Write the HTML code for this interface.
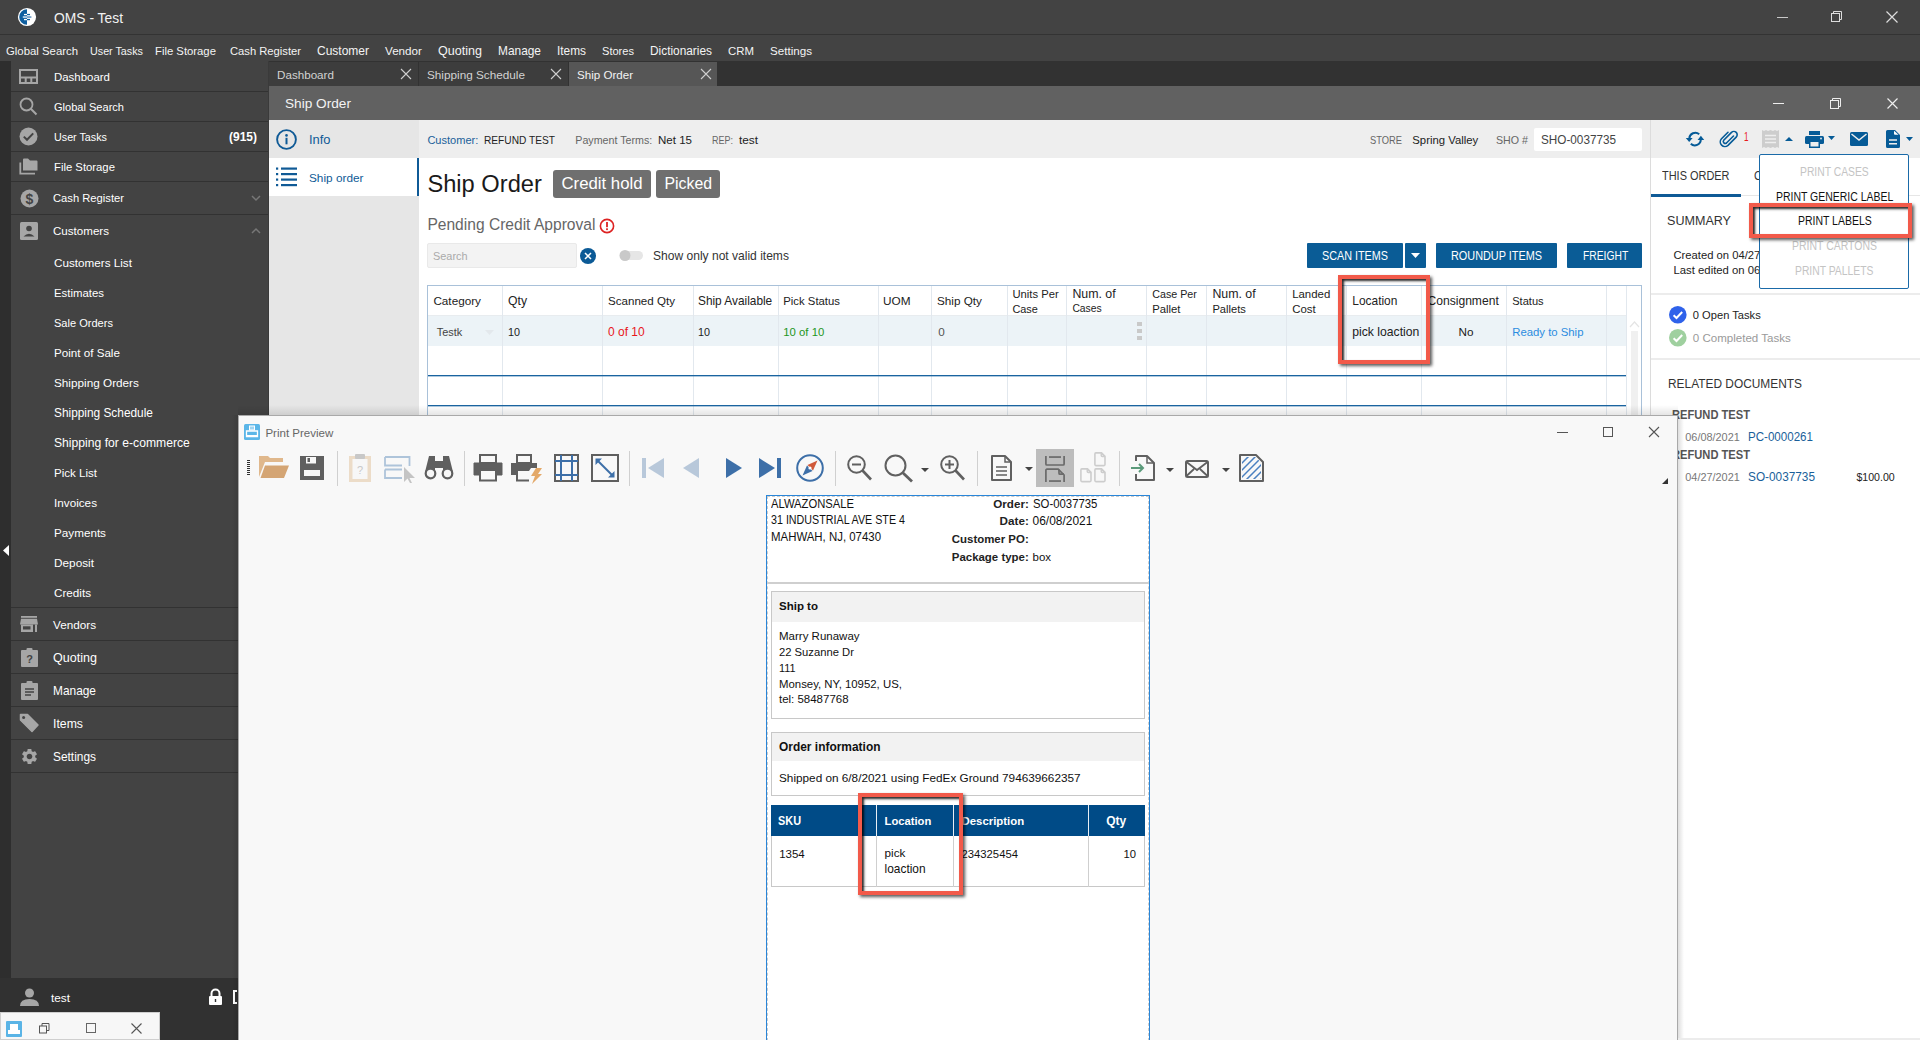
<!DOCTYPE html><html><head><meta charset="utf-8"><style>html,body{margin:0;padding:0;width:1920px;height:1040px;overflow:hidden;position:relative;background:#fff;font-family:"Liberation Sans",sans-serif}
.a{position:absolute}
.t{position:absolute;white-space:pre}
svg{overflow:visible}
</style></head><body ><div class="a" style="left:0px;top:0px;width:1920px;height:34px;background:#434343"></div>
<div class="a" style="left:0px;top:34px;width:1920px;height:1px;background:#333"></div>
<div class="a" style="left:0px;top:35px;width:1920px;height:26px;background:#434343"></div>
<svg class="a" style="left:18px;top:8px" width="18" height="18" viewBox="0 0 18 18"><circle cx="9" cy="9" r="9.1" fill="#fff"/><path d="M9 1.2 A7.8 7.8 0 0 0 9 16.8 Z" fill="#0f5fa0"/><rect x="6" y="5.9" width="3" height="1.3" fill="#fff"/><rect x="9" y="5.9" width="3" height="1.3" fill="#0f5fa0"/><rect x="4.8" y="8.3" width="4.2" height="1.5" fill="#d8e6f2"/><rect x="9" y="8.3" width="4.4" height="1.5" fill="#5b8fbf"/><rect x="6" y="10.9" width="3" height="1.3" fill="#fff"/><rect x="9" y="10.9" width="3" height="1.3" fill="#0f5fa0"/></svg>
<div class="t" style="left:54.0px;top:8.1px;font-size:13.85px;line-height:20px;color:#f2f2f2;">OMS - Test</div>
<div class="a" style="left:1777px;top:16.5px;width:11px;height:1.5px;background:#c8c8c8"></div>
<svg class="a" style="left:1831px;top:11px" width="12" height="12" viewBox="0 0 12 12"><rect x="0.5" y="2.5" width="8" height="8" fill="none" stroke="#ddd"/><path d="M2.5 2.5 V0.5 H10.5 V8.5 H8.5" fill="none" stroke="#ddd"/></svg>
<svg class="a" style="left:1886px;top:11px" width="12" height="12" viewBox="0 0 12 12"><path d="M0.5 0.5 L11.5 11.5 M11.5 0.5 L0.5 11.5" stroke="#ddd" stroke-width="1.2"/></svg>
<div class="t" style="left:6.0px;top:40.5px;font-size:11.36px;line-height:20px;color:#f4f4f4;">Global Search</div>
<div class="t" style="left:90.0px;top:40.5px;font-size:10.76px;line-height:20px;color:#f4f4f4;">User Tasks</div>
<div class="t" style="left:155.0px;top:40.5px;font-size:11.31px;line-height:20px;color:#f4f4f4;">File Storage</div>
<div class="t" style="left:230.0px;top:40.5px;font-size:11.21px;line-height:20px;color:#f4f4f4;">Cash Register</div>
<div class="t" style="left:317.0px;top:40.5px;font-size:12.0px;line-height:20px;color:#f4f4f4;">Customer</div>
<div class="t" style="left:385.0px;top:40.5px;font-size:11.67px;line-height:20px;color:#f4f4f4;">Vendor</div>
<div class="t" style="left:438.0px;top:40.5px;font-size:12.56px;line-height:20px;color:#f4f4f4;">Quoting</div>
<div class="t" style="left:498.0px;top:40.5px;font-size:11.9px;line-height:20px;color:#f4f4f4;">Manage</div>
<div class="t" style="left:557.0px;top:40.5px;font-size:11.86px;line-height:20px;color:#f4f4f4;">Items</div>
<div class="t" style="left:602.0px;top:40.5px;font-size:11.07px;line-height:20px;color:#f4f4f4;">Stores</div>
<div class="t" style="left:650.0px;top:40.5px;font-size:11.87px;line-height:20px;color:#f4f4f4;">Dictionaries</div>
<div class="t" style="left:728.0px;top:40.5px;font-size:11.42px;line-height:20px;color:#f4f4f4;">CRM</div>
<div class="t" style="left:770.0px;top:40.5px;font-size:11.62px;line-height:20px;color:#f4f4f4;">Settings</div>
<div class="a" style="left:0px;top:61px;width:11px;height:917px;background:#2e2e2e"></div>
<div class="a" style="left:11px;top:61px;width:257px;height:917px;background:#434343"></div>
<div class="a" style="left:268px;top:61px;width:1px;height:979px;background:#3a3a3a"></div>
<div class="a" style="left:11px;top:91px;width:257px;height:1px;background:#323232"></div>
<div class="a" style="left:11px;top:121px;width:257px;height:1px;background:#323232"></div>
<div class="a" style="left:11px;top:151px;width:257px;height:1px;background:#323232"></div>
<div class="a" style="left:11px;top:181px;width:257px;height:1px;background:#323232"></div>
<div class="a" style="left:11px;top:214px;width:257px;height:1px;background:#323232"></div>
<div class="a" style="left:11px;top:607px;width:257px;height:1px;background:#323232"></div>
<div class="a" style="left:11px;top:640px;width:257px;height:1px;background:#323232"></div>
<div class="a" style="left:11px;top:673px;width:257px;height:1px;background:#323232"></div>
<div class="a" style="left:11px;top:706px;width:257px;height:1px;background:#323232"></div>
<div class="a" style="left:11px;top:739px;width:257px;height:1px;background:#323232"></div>
<div class="a" style="left:11px;top:772px;width:257px;height:1px;background:#323232"></div>
<div class="t" style="left:54.0px;top:66.6px;font-size:11.45px;line-height:20px;color:#ffffff;">Dashboard</div>
<div class="t" style="left:54.0px;top:96.5px;font-size:11.05px;line-height:20px;color:#ffffff;">Global Search</div>
<div class="t" style="left:54.0px;top:126.5px;font-size:10.76px;line-height:20px;color:#ffffff;">User Tasks</div>
<div class="t" style="left:54.0px;top:156.5px;font-size:11.31px;line-height:20px;color:#ffffff;">File Storage</div>
<div class="t" style="left:53.0px;top:188.0px;font-size:11.21px;line-height:20px;color:#ffffff;">Cash Register</div>
<div class="t" style="left:53.0px;top:221.0px;font-size:11.58px;line-height:20px;color:#ffffff;">Customers</div>
<div class="t" style="left:229.0px;top:126.5px;font-size:11.99px;line-height:20px;color:#ffffff;font-weight:bold;">(915)</div>
<div class="t" style="left:54.0px;top:252.5px;font-size:11.7px;line-height:20px;color:#ffffff;">Customers List</div>
<div class="t" style="left:54.0px;top:282.5px;font-size:11.39px;line-height:20px;color:#ffffff;">Estimates</div>
<div class="t" style="left:54.0px;top:312.5px;font-size:11.06px;line-height:20px;color:#ffffff;">Sale Orders</div>
<div class="t" style="left:54.0px;top:342.5px;font-size:11.64px;line-height:20px;color:#ffffff;">Point of Sale</div>
<div class="t" style="left:54.0px;top:372.5px;font-size:11.76px;line-height:20px;color:#ffffff;">Shipping Orders</div>
<div class="t" style="left:54.0px;top:402.5px;font-size:11.87px;line-height:20px;color:#ffffff;">Shipping Schedule</div>
<div class="t" style="left:54.0px;top:432.5px;font-size:12.17px;line-height:20px;color:#ffffff;">Shipping for e-commerce</div>
<div class="t" style="left:54.0px;top:462.5px;font-size:11.55px;line-height:20px;color:#ffffff;">Pick List</div>
<div class="t" style="left:54.0px;top:492.5px;font-size:11.72px;line-height:20px;color:#ffffff;">Invoices</div>
<div class="t" style="left:54.0px;top:522.5px;font-size:11.69px;line-height:20px;color:#ffffff;">Payments</div>
<div class="t" style="left:54.0px;top:552.5px;font-size:11.8px;line-height:20px;color:#ffffff;">Deposit</div>
<div class="t" style="left:54.0px;top:582.5px;font-size:11.68px;line-height:20px;color:#ffffff;">Credits</div>
<div class="t" style="left:53.0px;top:614.5px;font-size:11.72px;line-height:20px;color:#ffffff;">Vendors</div>
<div class="t" style="left:53.0px;top:647.5px;font-size:12.56px;line-height:20px;color:#ffffff;">Quoting</div>
<div class="t" style="left:53.0px;top:681.0px;font-size:11.9px;line-height:20px;color:#ffffff;">Manage</div>
<div class="t" style="left:53.0px;top:714.0px;font-size:12.27px;line-height:20px;color:#ffffff;">Items</div>
<div class="t" style="left:53.0px;top:747.0px;font-size:11.9px;line-height:20px;color:#ffffff;">Settings</div>
<svg class="a" style="left:19px;top:69px" width="19" height="15" viewBox="0 0 19 15"><rect x="1" y="1" width="17" height="13" fill="none" stroke="#a6a6a6" stroke-width="2"/><path d="M1 8.5 H18 M6.7 8.5 V14 M12.3 8.5 V14" stroke="#a6a6a6" stroke-width="2"/></svg>
<svg class="a" style="left:19px;top:97px" width="19" height="19" viewBox="0 0 19 19"><circle cx="7.5" cy="7.5" r="6" fill="none" stroke="#a6a6a6" stroke-width="1.8"/><path d="M11.8 11.8 L17.5 17.5" stroke="#a6a6a6" stroke-width="2"/></svg>
<svg class="a" style="left:19px;top:127px" width="19" height="19" viewBox="0 0 19 19"><circle cx="9.5" cy="9.5" r="9" fill="#a6a6a6"/><path d="M4.8 9.6 L8 12.8 L14.2 6.4" fill="none" stroke="#434343" stroke-width="2"/></svg>
<svg class="a" style="left:19px;top:158px" width="19" height="17" viewBox="0 0 19 17"><path d="M4 1.5 A1 1 0 0 1 5 0.5 H9 L11 2.5 H17.5 A1 1 0 0 1 18.5 3.5 V12.5 H4 Z" fill="#a6a6a6"/><path d="M1.3 4.5 V15.7 H16" fill="none" stroke="#a6a6a6" stroke-width="1.8"/></svg>
<svg class="a" style="left:20px;top:189px" width="19" height="19" viewBox="0 0 19 19"><circle cx="9.5" cy="9.5" r="9" fill="#a6a6a6"/><text x="9.5" y="14.5" text-anchor="middle" font-family="Liberation Sans" font-size="14" font-weight="bold" fill="#434343">$</text></svg>
<svg class="a" style="left:20px;top:222px" width="18" height="18" viewBox="0 0 18 18"><rect x="0" y="0" width="18" height="18" rx="1.5" fill="#a6a6a6"/><circle cx="9" cy="6.5" r="2.8" fill="#434343"/><path d="M3.5 14.5 Q9 9 14.5 14.5 Z" fill="#434343"/></svg>
<svg class="a" style="left:251px;top:195px" width="10" height="6" viewBox="0 0 10 6"><path d="M1 1 L5 5 L9 1" fill="none" stroke="#777" stroke-width="1.5"/></svg>
<svg class="a" style="left:251px;top:228px" width="10" height="6" viewBox="0 0 10 6"><path d="M1 5 L5 1 L9 5" fill="none" stroke="#777" stroke-width="1.5"/></svg>
<svg class="a" style="left:20px;top:616px" width="18" height="17" viewBox="0 0 18 17"><rect x="1" y="0" width="16" height="1.8" fill="#a6a6a6"/><path d="M1 2.8 H17 L18 8.5 H0 Z" fill="#a6a6a6"/><rect x="1" y="8.5" width="12" height="7.5" fill="#a6a6a6"/><rect x="3" y="10.3" width="7.5" height="3.2" fill="#434343"/><rect x="15" y="8.5" width="2" height="7.5" fill="#a6a6a6"/></svg>
<svg class="a" style="left:21px;top:648px" width="17" height="19" viewBox="0 0 17 19"><rect x="0" y="2" width="17" height="17" rx="1" fill="#a6a6a6"/><rect x="5.5" y="0" width="6" height="4" rx="1" fill="#a6a6a6"/><text x="8.5" y="15" text-anchor="middle" font-family="Liberation Sans" font-size="11" font-weight="bold" fill="#434343">?</text></svg>
<svg class="a" style="left:21px;top:681px" width="17" height="19" viewBox="0 0 17 19"><rect x="0" y="2" width="17" height="17" rx="1" fill="#a6a6a6"/><rect x="5.5" y="0" width="6" height="4" rx="1" fill="#a6a6a6"/><path d="M4 8 H13 M4 11 H13 M4 14 H10" stroke="#434343" stroke-width="1.4"/></svg>
<svg class="a" style="left:19px;top:713px" width="20" height="20" viewBox="0 0 20 20"><path d="M1.5 1.5 H8.5 L19 12 L13 18.5 L1.5 7 Z" fill="#a6a6a6" stroke="#a6a6a6" stroke-width="1.5" stroke-linejoin="round"/><circle cx="4.6" cy="4.4" r="1.5" fill="#434343"/></svg>
<svg class="a" style="left:20px;top:747px" width="19" height="19" viewBox="0 0 24 24"><path fill="#a6a6a6" d="M19.14 12.94c.04-.3.06-.61.06-.94 0-.32-.02-.64-.07-.94l2.03-1.58a.49.49 0 0 0 .12-.61l-1.92-3.32a.488.488 0 0 0-.59-.22l-2.39.96c-.5-.38-1.03-.7-1.62-.94l-.36-2.54a.484.484 0 0 0-.48-.41h-3.84c-.24 0-.43.17-.47.41l-.36 2.54c-.59.24-1.13.57-1.62.94l-2.39-.96c-.22-.08-.47 0-.59.22L2.74 8.87c-.12.21-.08.47.12.61l2.03 1.58c-.05.3-.09.63-.09.94s.02.64.07.94l-2.03 1.58a.49.49 0 0 0-.12.61l1.92 3.32c.12.22.37.29.59.22l2.39-.96c.5.38 1.03.7 1.62.94l.36 2.54c.05.24.24.41.48.41h3.84c.24 0 .44-.17.47-.41l.36-2.54c.59-.24 1.13-.56 1.62-.94l2.39.96c.22.08.47 0 .59-.22l1.92-3.32c.12-.22.07-.47-.12-.61l-2.01-1.58zM12 15.6c-1.98 0-3.6-1.62-3.6-3.6s1.62-3.6 3.6-3.6 3.6 1.62 3.6 3.6-1.62 3.6-3.6 3.6z"/></svg>
<svg class="a" style="left:3px;top:545px" width="7" height="11" viewBox="0 0 7 11"><path d="M6 0 V11 L0 5.5 Z" fill="#fff"/></svg>
<div class="a" style="left:0px;top:978px;width:268px;height:62px;background:#313131"></div>
<svg class="a" style="left:20px;top:988px" width="19" height="18" viewBox="0 0 19 18"><circle cx="9.5" cy="5" r="4.5" fill="#a6a6a6"/><path d="M0 18 Q0 11 9.5 11 Q19 11 19 18 Z" fill="#a6a6a6"/></svg>
<div class="t" style="left:51.0px;top:987.5px;font-size:11.79px;line-height:20px;color:#fff;">test</div>
<svg class="a" style="left:208px;top:989px" width="15" height="16" viewBox="0 0 15 16"><path d="M3.5 7 V4.5 A4 4 0 0 1 11.5 4.5 V7" fill="none" stroke="#fff" stroke-width="2"/><rect x="1" y="7" width="13" height="9" rx="1" fill="#fff"/><rect x="6.8" y="10" width="1.4" height="3" fill="#313131"/></svg>
<div class="a" style="left:233px;top:990px;width:4px;height:14px;border:2px solid #fff;border-right:none;box-sizing:border-box"></div>
<div class="a" style="left:0px;top:1012px;width:160px;height:28px;background:#f7f7f7;border:1px solid #cfcfcf;box-sizing:border-box"></div>
<svg class="a" style="left:6px;top:1021px" width="16" height="16" viewBox="0 0 16 16"><rect x="0" y="0" width="16" height="16" rx="1" fill="#5ab4e6"/><rect x="4" y="3" width="8" height="6" fill="#fff"/><rect x="2" y="9" width="12" height="4" fill="#fff"/></svg>
<svg class="a" style="left:39px;top:1023px" width="11" height="11" viewBox="0 0 11 11"><rect x="0.5" y="3" width="7" height="7" fill="none" stroke="#555"/><path d="M3 3 V0.5 H10 V7.5 H7.5" fill="none" stroke="#555"/></svg>
<div class="a" style="left:86px;top:1023px;width:10px;height:10px;border:1px solid #666;box-sizing:border-box"></div>
<svg class="a" style="left:131px;top:1023px" width="11" height="11" viewBox="0 0 11 11"><path d="M0.5 0.5 L10.5 10.5 M10.5 0.5 L0.5 10.5" stroke="#555" stroke-width="1.1"/></svg>
<div class="a" style="left:269px;top:61px;width:1651px;height:25px;background:#323232"></div>
<div class="a" style="left:269px;top:62px;width:149px;height:24px;background:#3d3d3d"></div>
<div class="a" style="left:419px;top:62px;width:149px;height:24px;background:#3d3d3d"></div>
<div class="a" style="left:569px;top:62px;width:148px;height:24px;background:#565656"></div>
<div class="t" style="left:277.0px;top:64.5px;font-size:11.65px;line-height:20px;color:#d2d2d2;">Dashboard</div>
<div class="t" style="left:427.0px;top:64.5px;font-size:11.75px;line-height:20px;color:#d2d2d2;">Shipping Schedule</div>
<div class="t" style="left:577.0px;top:64.5px;font-size:11.58px;line-height:20px;color:#f2f2f2;">Ship Order</div>
<svg class="a" style="left:400px;top:68px" width="12" height="12" viewBox="0 0 12 12"><path d="M1 1 L11 11 M11 1 L1 11" stroke="#cfcfcf" stroke-width="1.1"/></svg>
<svg class="a" style="left:550px;top:68px" width="12" height="12" viewBox="0 0 12 12"><path d="M1 1 L11 11 M11 1 L1 11" stroke="#cfcfcf" stroke-width="1.1"/></svg>
<svg class="a" style="left:700px;top:68px" width="12" height="12" viewBox="0 0 12 12"><path d="M1 1 L11 11 M11 1 L1 11" stroke="#cfcfcf" stroke-width="1.1"/></svg>
<div class="a" style="left:269px;top:86px;width:1651px;height:34px;background:#616161"></div>
<div class="t" style="left:285.0px;top:94.0px;font-size:13.65px;line-height:20px;color:#f4f4f4;">Ship Order</div>
<div class="a" style="left:1773px;top:103px;width:11px;height:1px;background:#eee"></div>
<svg class="a" style="left:1830px;top:98px" width="11" height="11" viewBox="0 0 11 11"><rect x="0.5" y="2.5" width="8" height="8" fill="none" stroke="#eee"/><path d="M2.5 2.5 V0.5 H10.5 V8.5 H8.5" fill="none" stroke="#eee"/></svg>
<svg class="a" style="left:1887px;top:98px" width="11" height="11" viewBox="0 0 11 11"><path d="M0.5 0.5 L10.5 10.5 M10.5 0.5 L0.5 10.5" stroke="#eee" stroke-width="1.2"/></svg>
<div class="a" style="left:269px;top:120px;width:150px;height:920px;background:#e6e6e6"></div>
<div class="a" style="left:269px;top:158px;width:148px;height:38px;background:#fff"></div>
<div class="a" style="left:417px;top:158px;width:2px;height:38px;background:#0f5a96"></div>
<svg class="a" style="left:276px;top:129px" width="21" height="21" viewBox="0 0 21 21"><circle cx="10.5" cy="10.5" r="9.4" fill="none" stroke="#0f5a96" stroke-width="1.9"/><circle cx="10.5" cy="6.4" r="1.3" fill="#0f5a96"/><rect x="9.5" y="8.8" width="2" height="6.5" fill="#0f5a96"/></svg>
<div class="t" style="left:309.0px;top:129.5px;font-size:12.89px;line-height:20px;color:#0f5a96;">Info</div>
<svg class="a" style="left:276px;top:167px" width="21" height="20" viewBox="0 0 21 20"><rect x="0" y="0.5" width="2.2" height="2.2" fill="#0f5a96"/><rect x="5" y="0.5" width="16" height="2.2" fill="#0f5a96"/><rect x="0" y="6" width="2.2" height="2.2" fill="#0f5a96"/><rect x="5" y="6" width="16" height="2.2" fill="#0f5a96"/><rect x="0" y="11.5" width="2.2" height="2.2" fill="#0f5a96"/><rect x="5" y="11.5" width="16" height="2.2" fill="#0f5a96"/><rect x="0" y="17" width="2.2" height="2.2" fill="#0f5a96"/><rect x="5" y="17" width="16" height="2.2" fill="#0f5a96"/></svg>
<div class="t" style="left:309.0px;top:168.0px;font-size:11.81px;line-height:20px;color:#0f5a96;">Ship order</div>
<div class="a" style="left:419px;top:120px;width:1231px;height:38px;background:#eeeeee"></div>
<div class="t" style="left:427.4px;top:129.5px;font-size:11.06px;line-height:20px;color:#1a5f9a;">Customer:</div>
<div class="t" style="left:484.0px;top:129.5px;font-size:11.8px;line-height:20px;color:#222;transform:scaleX(0.8618);transform-origin:0 50%;">REFUND TEST</div>
<div class="t" style="left:575.3px;top:129.5px;font-size:10.69px;line-height:20px;color:#666;">Payment Terms:</div>
<div class="t" style="left:658.0px;top:129.5px;font-size:11.54px;line-height:20px;color:#222;">Net 15</div>
<div class="t" style="left:712.0px;top:129.5px;font-size:11px;line-height:20px;color:#666;transform:scaleX(0.8179);transform-origin:0 50%;">REP:</div>
<div class="t" style="left:739.0px;top:129.5px;font-size:11.79px;line-height:20px;color:#222;">test</div>
<div class="t" style="left:1370.3px;top:130.0px;font-size:11px;line-height:20px;color:#666;transform:scaleX(0.8489);transform-origin:0 50%;">STORE</div>
<div class="t" style="left:1412.3px;top:130.0px;font-size:11.34px;line-height:20px;color:#222;">Spring Valley</div>
<div class="t" style="left:1496.3px;top:130.0px;font-size:11px;line-height:20px;color:#666;transform:scaleX(0.9693);transform-origin:0 50%;">SHO #</div>
<div class="a" style="left:1534px;top:128px;width:108px;height:23px;background:#fff;border-radius:2px"></div>
<div class="t" style="left:1541.3px;top:130.0px;font-size:12px;line-height:20px;color:#444;transform:scaleX(0.9776);transform-origin:0 50%;">SHO-0037735</div>
<div class="a" style="left:419px;top:158px;width:1231px;height:882px;background:#fff"></div>
<div class="t" style="left:427.4px;top:173.5px;font-size:23.68px;line-height:20px;color:#1a1a1a;">Ship Order</div>
<div class="a" style="left:553px;top:169.5px;width:98px;height:28px;background:#6f6f6f;border-radius:3px"></div>
<div class="t" style="left:561.5px;top:173.5px;font-size:16.75px;line-height:20px;color:#fff;">Credit hold</div>
<div class="a" style="left:656px;top:169.5px;width:64px;height:28px;background:#6f6f6f;border-radius:3px"></div>
<div class="t" style="left:664.5px;top:173.5px;font-size:15.83px;line-height:20px;color:#fff;">Picked</div>
<div class="t" style="left:427.4px;top:214.6px;font-size:15.58px;line-height:20px;color:#666;">Pending Credit Approval</div>
<svg class="a" style="left:599px;top:218px" width="16" height="16" viewBox="0 0 16 16"><circle cx="8" cy="8" r="6.6" fill="none" stroke="#dd2222" stroke-width="1.6"/><rect x="7.1" y="4" width="1.8" height="5.2" fill="#dd2222"/><rect x="7.1" y="10.3" width="1.8" height="1.8" fill="#dd2222"/></svg>
<div class="a" style="left:427px;top:243px;width:150px;height:25px;background:#f3f3f3;border:1px solid #e9e9e9;border-radius:2px;box-sizing:border-box"></div>
<div class="t" style="left:433.0px;top:245.5px;font-size:10.92px;line-height:20px;color:#aaaaaa;">Search</div>
<svg class="a" style="left:580px;top:247.5px" width="16" height="16" viewBox="0 0 16 16"><circle cx="8" cy="8" r="8" fill="#0b5a96"/><path d="M5 5 L11 11 M11 5 L5 11" stroke="#fff" stroke-width="1.5"/></svg>
<div class="a" style="left:620px;top:251px;width:23px;height:9px;background:#e6e6e6;border-radius:5px"></div>
<svg class="a" style="left:619px;top:250px" width="12" height="12" viewBox="0 0 12 12"><circle cx="6" cy="5.5" r="5.5" fill="#c9c9c9"/></svg>
<div class="t" style="left:653.0px;top:245.5px;font-size:12.05px;line-height:20px;color:#333;">Show only not valid items</div>
<div class="a" style="left:1307px;top:243.2px;width:96px;height:24.4px;background:#0a5c96;border-radius:1px"></div>
<div class="a" style="left:1404.5px;top:243.2px;width:21.5px;height:24.4px;background:#0a5c96;border-radius:1px"></div>
<div class="a" style="left:1436.3px;top:243.2px;width:120.7px;height:24.4px;background:#0a5c96;border-radius:1px"></div>
<div class="a" style="left:1567.3px;top:243.2px;width:74.7px;height:24.4px;background:#0a5c96;border-radius:1px"></div>
<div class="t" style="left:1322.0px;top:245.5px;font-size:12px;line-height:20px;color:#fff;transform:scaleX(0.8999);transform-origin:0 50%;">SCAN ITEMS</div>
<svg class="a" style="left:1411px;top:253px" width="9" height="5" viewBox="0 0 9 5"><path d="M0 0 H9 L4.5 5 Z" fill="#fff"/></svg>
<div class="t" style="left:1451.3px;top:245.5px;font-size:12px;line-height:20px;color:#fff;transform:scaleX(0.9059);transform-origin:0 50%;">ROUNDUP ITEMS</div>
<div class="t" style="left:1582.5px;top:245.5px;font-size:12px;line-height:20px;color:#fff;transform:scaleX(0.8583);transform-origin:0 50%;">FREIGHT</div>
<div class="a" style="left:427px;top:284.5px;width:1215px;height:1px;background:#a9c1d9"></div>
<div class="a" style="left:427px;top:284.5px;width:1px;height:131px;background:#a9c1d9"></div>
<div class="a" style="left:1641px;top:284.5px;width:1px;height:131px;background:#a9c1d9"></div>
<div class="a" style="left:428px;top:315px;width:1198px;height:1px;background:#e8ecef"></div>
<div class="a" style="left:428px;top:316px;width:1198px;height:30px;background:#ecf3f7"></div>
<div class="a" style="left:502px;top:285.5px;width:1px;height:130px;background:#e2e8ee"></div>
<div class="a" style="left:602px;top:285.5px;width:1px;height:130px;background:#e2e8ee"></div>
<div class="a" style="left:692.5px;top:285.5px;width:1px;height:130px;background:#e2e8ee"></div>
<div class="a" style="left:777.5px;top:285.5px;width:1px;height:130px;background:#e2e8ee"></div>
<div class="a" style="left:877.5px;top:285.5px;width:1px;height:130px;background:#e2e8ee"></div>
<div class="a" style="left:931px;top:285.5px;width:1px;height:130px;background:#e2e8ee"></div>
<div class="a" style="left:1006.5px;top:285.5px;width:1px;height:130px;background:#e2e8ee"></div>
<div class="a" style="left:1066.2px;top:285.5px;width:1px;height:130px;background:#e2e8ee"></div>
<div class="a" style="left:1146px;top:285.5px;width:1px;height:130px;background:#e2e8ee"></div>
<div class="a" style="left:1206px;top:285.5px;width:1px;height:130px;background:#e2e8ee"></div>
<div class="a" style="left:1286px;top:285.5px;width:1px;height:130px;background:#e2e8ee"></div>
<div class="a" style="left:1346.3px;top:285.5px;width:1px;height:130px;background:#e2e8ee"></div>
<div class="a" style="left:1421px;top:285.5px;width:1px;height:130px;background:#e2e8ee"></div>
<div class="a" style="left:1505.7px;top:285.5px;width:1px;height:130px;background:#e2e8ee"></div>
<div class="a" style="left:1606.4px;top:285.5px;width:1px;height:130px;background:#e2e8ee"></div>
<div class="a" style="left:1625.6px;top:285.5px;width:1px;height:130px;background:#e2e8ee"></div>
<div class="a" style="left:428px;top:375px;width:1198px;height:1px;background:#1a64a0"></div>
<div class="a" style="left:428px;top:376px;width:1198px;height:1px;background:rgba(26,100,160,0.35)"></div>
<div class="a" style="left:428px;top:405px;width:1198px;height:1px;background:#1a64a0"></div>
<div class="a" style="left:428px;top:406px;width:1198px;height:1px;background:rgba(26,100,160,0.35)"></div>
<div class="a" style="left:1631px;top:331px;width:7px;height:84px;background:#f0f0f0"></div>
<svg class="a" style="left:1630px;top:322px" width="9" height="5" viewBox="0 0 9 5"><path d="M0 5 L4.5 0 L9 5" fill="none" stroke="#e4e4e4" stroke-width="1.2"/></svg>
<div class="t" style="left:433.4px;top:290.5px;font-size:11.73px;line-height:20px;color:#222;">Category</div>
<div class="t" style="left:508.0px;top:290.5px;font-size:12.21px;line-height:20px;color:#222;">Qty</div>
<div class="t" style="left:608.0px;top:290.5px;font-size:11.59px;line-height:20px;color:#222;">Scanned Qty</div>
<div class="t" style="left:698.0px;top:290.5px;font-size:11.85px;line-height:20px;color:#222;">Ship Available</div>
<div class="t" style="left:783.3px;top:290.5px;font-size:11.34px;line-height:20px;color:#222;">Pick Status</div>
<div class="t" style="left:883.3px;top:290.5px;font-size:11.5px;line-height:20px;color:#222;transform:scaleX(1.0249);transform-origin:0 50%;">UOM</div>
<div class="t" style="left:937.0px;top:290.5px;font-size:11.73px;line-height:20px;color:#222;">Ship Qty</div>
<div class="t" style="left:1352.3px;top:290.5px;font-size:11.93px;line-height:20px;color:#222;">Location</div>
<div class="t" style="left:1427.5px;top:290.5px;font-size:12.1px;line-height:20px;color:#222;">Consignment</div>
<div class="t" style="left:1512.2px;top:290.5px;font-size:11.08px;line-height:20px;color:#222;">Status</div>
<div class="t" style="left:1012.4px;top:284.0px;font-size:11.26px;line-height:20px;color:#222;">Units Per</div>
<div class="t" style="left:1012.4px;top:299.0px;font-size:10.92px;line-height:20px;color:#222;">Case</div>
<div class="t" style="left:1072.4px;top:284.0px;font-size:12.37px;line-height:20px;color:#222;">Num. of</div>
<div class="t" style="left:1072.4px;top:299.0px;font-size:10.34px;line-height:20px;color:#222;">Cases</div>
<div class="t" style="left:1152.2px;top:284.0px;font-size:10.72px;line-height:20px;color:#222;">Case Per</div>
<div class="t" style="left:1152.2px;top:299.0px;font-size:11.31px;line-height:20px;color:#222;">Pallet</div>
<div class="t" style="left:1212.4px;top:284.0px;font-size:12.37px;line-height:20px;color:#222;">Num. of</div>
<div class="t" style="left:1212.4px;top:299.0px;font-size:11.13px;line-height:20px;color:#222;">Pallets</div>
<div class="t" style="left:1292.2px;top:284.0px;font-size:11.42px;line-height:20px;color:#222;">Landed</div>
<div class="t" style="left:1292.2px;top:299.0px;font-size:11.43px;line-height:20px;color:#222;">Cost</div>
<div class="t" style="left:436.8px;top:321.9px;font-size:10.93px;line-height:20px;color:#444;">Testk</div>
<svg class="a" style="left:485px;top:330px" width="9" height="5" viewBox="0 0 9 5"><path d="M0 0 H9 L4.5 5 Z" fill="#e3e8ec"/></svg>
<div class="t" style="left:508.0px;top:321.9px;font-size:10.79px;line-height:20px;color:#222;">10</div>
<div class="t" style="left:608.0px;top:321.9px;font-size:11.97px;line-height:20px;color:#e8171b;">0 of 10</div>
<div class="t" style="left:698.0px;top:321.9px;font-size:10.79px;line-height:20px;color:#222;">10</div>
<div class="t" style="left:783.3px;top:321.9px;font-size:11.34px;line-height:20px;color:#1e961e;">10 of 10</div>
<div class="t" style="left:938.3px;top:322.3px;font-size:11.69px;line-height:20px;color:#555;">0</div>
<div class="a" style="left:1137px;top:322px;width:4.5px;height:4px;background:#c9c9c9"></div>
<div class="a" style="left:1137px;top:329px;width:4.5px;height:4px;background:#c9c9c9"></div>
<div class="a" style="left:1137px;top:336px;width:4.5px;height:4px;background:#c9c9c9"></div>
<div class="t" style="left:1352.3px;top:321.5px;font-size:12.18px;line-height:20px;color:#222;">pick loaction</div>
<div class="t" style="left:1458.6px;top:321.5px;font-size:11.73px;line-height:20px;color:#222;">No</div>
<div class="t" style="left:1512.2px;top:321.5px;font-size:11.35px;line-height:20px;color:#2b8ce0;">Ready to Ship</div>
<div class="a" style="left:1650px;top:120px;width:1px;height:920px;background:#dcdcdc"></div>
<div class="a" style="left:1651px;top:120px;width:269px;height:38px;background:#eeeeee"></div>
<div class="a" style="left:1651px;top:158px;width:269px;height:882px;background:#fff"></div>
<svg class="a" style="left:1685px;top:131px" width="20" height="16" viewBox="0 0 20 16"><path d="M4.3 7.5 A6 6 0 0 1 14.2 3.2" fill="none" stroke="#065b97" stroke-width="2"/><path d="M0.8 7 H7.6 L4.2 11 Z" fill="#065b97"/><path d="M15.8 8.5 A6 6 0 0 1 5.8 12.8" fill="none" stroke="#065b97" stroke-width="2"/><path d="M12.6 9 H19.2 L15.9 4.8 Z" fill="#065b97"/></svg>
<svg class="a" style="left:1720px;top:130px" width="18" height="19" viewBox="0 0 18 19"><path d="M13.5 6 L6.5 13 A2 2 0 0 1 3.7 10.2 L11.5 2.4 A3.3 3.3 0 0 1 16.2 7.1 L8 15.3 A4.6 4.6 0 0 1 1.5 8.8 L8 2.3" fill="none" stroke="#065b97" stroke-width="1.6" stroke-linecap="round"/></svg>
<div class="t" style="left:1743.8px;top:127.2px;font-size:12px;line-height:20px;color:#e81b1b;transform:scaleX(0.6742);transform-origin:0 50%;">1</div>
<svg class="a" style="left:1762px;top:130px" width="17" height="18" viewBox="0 0 17 18"><path d="M0 0 L2 1 L4 0 L6 1 L8.5 0 L11 1 L13 0 L15 1 L17 0 V18 L15 17 L13 18 L11 17 L8.5 18 L6 17 L4 18 L2 17 L0 18 Z" fill="#cdcdcd"/><path d="M3 5.5 H14 M3 9 H14 M3 12.5 H14" stroke="#eeeeee" stroke-width="1.3"/></svg>
<svg class="a" style="left:1785px;top:137px" width="8" height="4" viewBox="0 0 8 4"><path d="M0 4 L4 0 L8 4 Z" fill="#065b97"/></svg>
<svg class="a" style="left:1805px;top:131px" width="19" height="17" viewBox="0 0 19 17"><rect x="4" y="0" width="11" height="4" fill="#065b97"/><rect x="0" y="5" width="19" height="8" rx="1.5" fill="#065b97"/><rect x="4" y="10" width="11" height="7" fill="#065b97"/><rect x="5.5" y="11" width="8" height="4.5" fill="#eeeeee"/><circle cx="16" cy="7.5" r="0.9" fill="#eee"/></svg>
<svg class="a" style="left:1828px;top:136px" width="7" height="4" viewBox="0 0 7 4"><path d="M0 0 H7 L3.5 4 Z" fill="#065b97"/></svg>
<svg class="a" style="left:1850px;top:132px" width="18" height="14" viewBox="0 0 18 14"><rect x="0" y="0" width="18" height="14" rx="1.5" fill="#065b97"/><path d="M1.5 2 L9 8 L16.5 2" fill="none" stroke="#eeeeee" stroke-width="1.5"/></svg>
<svg class="a" style="left:1886px;top:130px" width="14" height="18" viewBox="0 0 14 18"><path d="M0 1.5 A1.5 1.5 0 0 1 1.5 0 H9 L14 5 V16.5 A1.5 1.5 0 0 1 12.5 18 H1.5 A1.5 1.5 0 0 1 0 16.5 Z" fill="#065b97"/><path d="M8 0.8 L8 3.8 A1 1 0 0 0 9 4.8 L12.5 4.8 Z" fill="#fff"/><path d="M3 9.9 H11 M3 13.7 H11" stroke="#eeeeee" stroke-width="1.5"/></svg>
<svg class="a" style="left:1906px;top:137px" width="7" height="4" viewBox="0 0 7 4"><path d="M0 0 H7 L3.5 4 Z" fill="#065b97"/></svg>
<div class="a" style="left:1651px;top:195px;width:269px;height:1px;background:#e6e6e6"></div>
<div class="a" style="left:1651px;top:194px;width:90px;height:2.5px;background:#0f5a96"></div>
<div class="t" style="left:1662.0px;top:166.2px;font-size:12.5px;line-height:20px;color:#333;transform:scaleX(0.8756);transform-origin:0 50%;">THIS ORDER</div>
<div class="t" style="left:1754.0px;top:166.2px;font-size:12.5px;line-height:20px;color:#333;transform:scaleX(0.8862);transform-origin:0 50%;">C</div>
<div class="t" style="left:1667.0px;top:211.4px;font-size:12.3px;line-height:20px;color:#333;transform:scaleX(1.0216);transform-origin:0 50%;">SUMMARY</div>
<div class="t" style="left:1673.5px;top:244.5px;font-size:11.24px;line-height:20px;color:#222;">Created on 04/27/2021</div>
<div class="t" style="left:1673.5px;top:259.6px;font-size:11.33px;line-height:20px;color:#222;">Last edited on 06/08/2021</div>
<div class="a" style="left:1651px;top:293px;width:269px;height:2px;background:#ececec"></div>
<svg class="a" style="left:1668.5px;top:306px" width="18" height="18" viewBox="0 0 18 18"><circle cx="8.8" cy="8.8" r="8.8" fill="#2f62ea"/><path d="M4.6 9.2 L7.5 12 L13.2 6" fill="none" stroke="#fff" stroke-width="2"/></svg>
<div class="t" style="left:1692.8px;top:304.7px;font-size:11.15px;line-height:20px;color:#222;">0 Open Tasks</div>
<svg class="a" style="left:1668.5px;top:329px" width="18" height="18" viewBox="0 0 18 18"><circle cx="8.8" cy="8.8" r="8.8" fill="#9fd09f"/><path d="M4.6 9.2 L7.5 12 L13.2 6" fill="none" stroke="#fff" stroke-width="2"/></svg>
<div class="t" style="left:1692.8px;top:327.9px;font-size:11.55px;line-height:20px;color:#9a9a9a;">0 Completed Tasks</div>
<div class="a" style="left:1651px;top:357.5px;width:269px;height:2px;background:#ececec"></div>
<div class="t" style="left:1667.8px;top:374.4px;font-size:12.5px;line-height:20px;color:#333;transform:scaleX(0.9520);transform-origin:0 50%;">RELATED DOCUMENTS</div>
<div class="t" style="left:1672.0px;top:405.4px;font-size:12px;line-height:20px;color:#555;font-weight:bold;transform:scaleX(0.9286);transform-origin:0 50%;">REFUND TEST</div>
<div class="t" style="left:1685.3px;top:426.9px;font-size:10.89px;line-height:20px;color:#777;">06/08/2021</div>
<div class="t" style="left:1748.3px;top:426.9px;font-size:12.3px;line-height:20px;color:#1a5f9a;transform:scaleX(0.9411);transform-origin:0 50%;">PC-0000261</div>
<div class="t" style="left:1672.0px;top:445.3px;font-size:12px;line-height:20px;color:#555;font-weight:bold;transform:scaleX(0.9286);transform-origin:0 50%;">REFUND TEST</div>
<div class="t" style="left:1685.3px;top:466.6px;font-size:10.89px;line-height:20px;color:#777;">04/27/2021</div>
<div class="t" style="left:1748.3px;top:466.6px;font-size:12.3px;line-height:20px;color:#1a5f9a;transform:scaleX(0.9605);transform-origin:0 50%;">SO-0037735</div>
<div class="t" style="left:1856.4px;top:466.6px;font-size:10.6px;line-height:20px;color:#222;">$100.00</div>
<div class="a" style="left:1759px;top:154px;width:150px;height:134.5px;background:#fff;border:1px solid #1a6aa8;border-radius:2px;box-sizing:border-box"></div>
<div class="t" style="left:1800.0px;top:161.6px;font-size:12.3px;line-height:20px;color:#c4c4c4;transform:scaleX(0.8399);transform-origin:0 50%;">PRINT CASES</div>
<div class="t" style="left:1775.6px;top:186.5px;font-size:12.3px;line-height:20px;color:#111;transform:scaleX(0.8509);transform-origin:0 50%;">PRINT GENERIC LABEL</div>
<div class="t" style="left:1797.5px;top:211.2px;font-size:12.3px;line-height:20px;color:#111;transform:scaleX(0.8511);transform-origin:0 50%;">PRINT LABELS</div>
<div class="t" style="left:1791.8px;top:236.3px;font-size:12.3px;line-height:20px;color:#c4c4c4;transform:scaleX(0.8518);transform-origin:0 50%;">PRINT CARTONS</div>
<div class="t" style="left:1795.1px;top:261.4px;font-size:12.3px;line-height:20px;color:#c4c4c4;transform:scaleX(0.8413);transform-origin:0 50%;">PRINT PALLETS</div>
<div class="a" style="left:1749px;top:203px;width:163px;height:35.19999999999999px;border:4px solid #f25a4a;box-sizing:border-box;box-shadow:2px 2px 3px rgba(0,0,0,0.65), inset 2px 2px 2.5px rgba(0,0,0,0.85)"></div>
<div class="a" style="left:1338.3px;top:275.2px;width:91.70000000000005px;height:89.0px;border:4px solid #f25a4a;box-sizing:border-box;box-shadow:2px 2px 3px rgba(0,0,0,0.65), inset 2px 2px 2.5px rgba(0,0,0,0.85)"></div>
<div class="a" style="left:238px;top:405px;width:1440px;height:10px;background:linear-gradient(to bottom, rgba(0,0,0,0) 0%, rgba(0,0,0,0.10) 100%)"></div>
<div class="a" style="left:1678px;top:415px;width:6px;height:625px;background:linear-gradient(to right, rgba(0,0,0,0.13) 0%, rgba(0,0,0,0) 100%)"></div>
<div class="a" style="left:232px;top:415px;width:6px;height:625px;background:linear-gradient(to left, rgba(0,0,0,0.10) 0%, rgba(0,0,0,0) 100%)"></div>
<div class="a" style="left:1678px;top:1038px;width:242px;height:2px;background:#ececec"></div>
<div class="a" style="left:238px;top:415px;width:1440px;height:625px;background:#f8f8f8;border:1px solid #a9a9a9;border-bottom:none;box-sizing:border-box"></div>
<svg class="a" style="left:244px;top:424px" width="16" height="16" viewBox="0 0 16 16"><rect x="0" y="0" width="16" height="16" rx="1.5" fill="#5bb6e8"/><rect x="5" y="1.5" width="6" height="5" fill="#fff"/><rect x="6" y="2.5" width="4" height="3" fill="#9fd4f2"/><path d="M2.5 7 H13.5 V12.5 H2.5 Z" fill="none" stroke="#fff" stroke-width="1.3"/><rect x="3" y="11" width="10" height="2" fill="#fff"/></svg>
<div class="t" style="left:265.4px;top:422.5px;font-size:11.54px;line-height:20px;color:#666;">Print Preview</div>
<div class="a" style="left:1557px;top:432px;width:10.5px;height:1.2px;background:#555"></div>
<div class="a" style="left:1603px;top:427px;width:10px;height:10px;border:1.2px solid #555;box-sizing:border-box"></div>
<svg class="a" style="left:1649px;top:427px" width="10" height="10" viewBox="0 0 10 10"><path d="M0 0 L10 10 M10 0 L0 10" stroke="#555" stroke-width="1.1"/></svg>
<svg class="a" style="left:1662px;top:478px" width="6" height="6" viewBox="0 0 6 6"><path d="M6 0 V6 H0 Z" fill="#333"/></svg>
<svg class="a" style="left:247px;top:460px" width="3" height="16" viewBox="0 0 3 16"><rect x="0" y="0" width="3" height="1" fill="#333"/><rect x="0" y="2" width="3" height="1" fill="#333"/><rect x="0" y="4" width="3" height="1" fill="#333"/><rect x="0" y="6" width="3" height="1" fill="#333"/><rect x="0" y="8" width="3" height="1" fill="#333"/><rect x="0" y="10" width="3" height="1" fill="#333"/><rect x="0" y="12" width="3" height="1" fill="#333"/><rect x="0" y="14" width="3" height="1" fill="#333"/></svg>
<svg class="a" style="left:259px;top:456px" width="30" height="22" viewBox="0 0 30 22"><path d="M0 0 H9 L11 2 H24 V6 H6 L0 21 Z" fill="#e0b88c"/><path d="M6 9.5 H30 L25 22 H1.5 Z" fill="#d4a574"/></svg>
<svg class="a" style="left:300px;top:456px" width="24" height="24" viewBox="0 0 24 24"><path d="M0 0 H24 V24 H0 Z" fill="#5f5f5f"/><rect x="6" y="1" width="10" height="6.5" fill="#f7f7f7"/><rect x="7.5" y="2" width="2.5" height="4" fill="#5f5f5f"/><rect x="4" y="14" width="16" height="6" fill="#f7f7f7"/></svg>
<div class="a" style="left:336.5px;top:451px;width:1px;height:35px;background:#d0d0d0"></div>
<svg class="a" style="left:349px;top:454px" width="22" height="28" viewBox="0 0 22 28"><path d="M0 2 H22 V28 H0 Z" fill="#ecdcc8"/><rect x="3.5" y="5" width="15" height="20" fill="#f7f7f7"/><rect x="6" y="0" width="10" height="5" rx="1" fill="#c8c8c8"/><text x="11" y="20" text-anchor="middle" font-family="Liberation Sans" font-size="11" fill="#c8c8c8">?</text></svg>
<svg class="a" style="left:384px;top:456px" width="32" height="27" viewBox="0 0 32 27"><path d="M1 1 H25.5 V10 M1 1 V9.5 H18 M1 13.5 H18 M1 13.5 V22 H18" fill="none" stroke="#aec4da" stroke-width="1.8"/><path d="M20 11 L31 22 L25.5 22 L28 27 L26 27 L23.5 22.5 L20 26 Z" fill="#c4c4c4"/></svg>
<svg class="a" style="left:425px;top:456px" width="28" height="24" viewBox="0 0 28 24"><path d="M4 0 H10 V5 H18 V0 H24 L28 16 H18 V12 H10 V16 H0 Z" fill="#5f5f5f"/><circle cx="5.5" cy="17.5" r="4.8" fill="#f7f7f7" stroke="#5f5f5f" stroke-width="2.2"/><circle cx="22.5" cy="17.5" r="4.8" fill="#f7f7f7" stroke="#5f5f5f" stroke-width="2.2"/></svg>
<div class="a" style="left:463.5px;top:451px;width:1px;height:35px;background:#d0d0d0"></div>
<svg class="a" style="left:474px;top:454px" width="28" height="28" viewBox="0 0 28 28"><rect x="6" y="1" width="16" height="8" fill="none" stroke="#5f5f5f" stroke-width="2"/><path d="M0 9 H28 V21 H22 V15 H6 V21 H0 Z" fill="#5f5f5f" stroke="#5f5f5f" stroke-linejoin="round" stroke-width="1"/><rect x="6" y="16" width="16" height="10.5" fill="none" stroke="#5f5f5f" stroke-width="2"/></svg>
<svg class="a" style="left:511px;top:454px" width="32" height="30" viewBox="0 0 32 30"><rect x="6" y="1" width="14" height="8" fill="none" stroke="#5f5f5f" stroke-width="2"/><path d="M0 9 H26 V14 H20 L18 17 H6 V21 H0 Z" fill="#5f5f5f"/><path d="M6 16 V26.5 H18" fill="none" stroke="#5f5f5f" stroke-width="2"/><path d="M25 14 L31 14 L27 20 L31 20 L21 30 L24 22 L20 22 Z" fill="#e3a868"/></svg>
<svg class="a" style="left:554px;top:454px" width="25" height="28" viewBox="0 0 25 28"><rect x="1" y="1" width="23" height="26" fill="none" stroke="#5f5f5f" stroke-width="2"/><path d="M7 1 V27 M18 1 V27 M1 7 H24 M1 21 H24" stroke="#3d6fa8" stroke-width="2"/></svg>
<svg class="a" style="left:591px;top:454px" width="28" height="28" viewBox="0 0 28 28"><rect x="1" y="1" width="26" height="26" fill="none" stroke="#5f5f5f" stroke-width="2"/><path d="M6 6 L22 22" stroke="#3d6fa8" stroke-width="2"/><path d="M4.5 4.5 H11 L4.5 11 Z M23.5 23.5 H17 L23.5 17 Z" fill="#3d6fa8"/></svg>
<div class="a" style="left:629.4px;top:451px;width:1px;height:35px;background:#d0d0d0"></div>
<svg class="a" style="left:642px;top:458px" width="22" height="20" viewBox="0 0 22 20"><rect x="0" y="0" width="4" height="20" fill="#b8c8da"/><path d="M22 0 V20 L6 10 Z" fill="#b8c8da"/></svg>
<svg class="a" style="left:683px;top:458px" width="16" height="20" viewBox="0 0 16 20"><path d="M16 0 V20 L0 10 Z" fill="#b8c8da"/></svg>
<svg class="a" style="left:726px;top:458px" width="16" height="20" viewBox="0 0 16 20"><path d="M0 0 V20 L16 10 Z" fill="#3d6fa8"/></svg>
<svg class="a" style="left:759px;top:458px" width="22" height="20" viewBox="0 0 22 20"><path d="M0 0 V20 L16 10 Z" fill="#3d6fa8"/><rect x="18" y="0" width="4" height="20" fill="#3d6fa8"/></svg>
<svg class="a" style="left:796px;top:454px" width="28" height="28" viewBox="0 0 28 28"><circle cx="14" cy="14" r="12.8" fill="none" stroke="#3d6fa8" stroke-width="2"/><path d="M21.5 6.5 L17 16.5 L11.5 11 Z" fill="#d0593a"/><path d="M6.5 21.5 L11 11.5 L16.5 17 Z" fill="#3d6fa8"/><circle cx="14" cy="14" r="1.6" fill="#fff"/></svg>
<div class="a" style="left:834.5px;top:451px;width:1px;height:35px;background:#d0d0d0"></div>
<svg class="a" style="left:847px;top:455px" width="25" height="26" viewBox="0 0 25 26"><circle cx="9.5" cy="9.5" r="8.3" fill="none" stroke="#606060" stroke-width="2"/><path d="M5 9.5 H14" stroke="#606060" stroke-width="2"/><path d="M15.5 15.5 L24 24.5" stroke="#606060" stroke-width="2.6"/></svg>
<svg class="a" style="left:884px;top:454px" width="29" height="28" viewBox="0 0 29 28"><circle cx="11.5" cy="11.5" r="10" fill="none" stroke="#606060" stroke-width="2"/><path d="M18.8 18.8 L28 27.5" stroke="#606060" stroke-width="2.8"/></svg>
<svg class="a" style="left:921px;top:467.5px" width="8" height="4" viewBox="0 0 8 4"><path d="M0 0 H8 L4 4 Z" fill="#444"/></svg>
<svg class="a" style="left:940px;top:455px" width="25" height="26" viewBox="0 0 25 26"><circle cx="9.5" cy="9.5" r="8.3" fill="none" stroke="#606060" stroke-width="2"/><path d="M5 9.5 H14 M9.5 5 V14" stroke="#606060" stroke-width="2"/><path d="M15.5 15.5 L24 24.5" stroke="#606060" stroke-width="2.6"/></svg>
<div class="a" style="left:976.5px;top:451px;width:1px;height:35px;background:#d0d0d0"></div>
<svg class="a" style="left:991px;top:455px" width="21" height="26" viewBox="0 0 21 26"><path d="M1 1 H14 L20 7 V25 H1 Z" fill="none" stroke="#606060" stroke-width="2" stroke-linejoin="round"/><path d="M14 1 V7 H20" fill="none" stroke="#606060" stroke-width="1.5"/><path d="M5 12 H16 M5 16 H16 M5 20 H16" stroke="#606060" stroke-width="1.6"/></svg>
<svg class="a" style="left:1024.5px;top:466.5px" width="8" height="4" viewBox="0 0 8 4"><path d="M0 0 H8 L4 4 Z" fill="#444"/></svg>
<div class="a" style="left:1036px;top:449.4px;width:38px;height:37.5px;background:#bdbdbd"></div>
<svg class="a" style="left:1045px;top:456px" width="20" height="26" viewBox="0 0 20 26"><g fill="none" stroke="#6a6a6a" stroke-width="1.7"><path d="M0.9 0 V8 A1 1 0 0 0 1.9 9 H18.1 A1 1 0 0 0 19.1 8 V0"/><path d="M0.9 26 V14.2 A1 1 0 0 1 1.9 13.2 H13.2 L19.1 19 V26"/><path d="M14 13.5 V17.2 A1 1 0 0 0 15 18.2 H19"/></g><rect x="4" y="0.2" width="12" height="1.7" fill="#6a6a6a"/><rect x="4" y="24.2" width="12" height="1.7" fill="#6a6a6a"/></svg>
<svg class="a" style="left:1094px;top:452px" width="12" height="14" viewBox="0 0 12 14"><path d="M0.9 1.9 A1 1 0 0 1 1.9 0.9 H7.5 L11 4.4 V12.6 A1 1 0 0 1 10 13.6 H1.9 A1 1 0 0 1 0.9 12.6 Z M7.3 1 V3.5 A1 1 0 0 0 8.3 4.5 H10.9" fill="none" stroke="#cdcdcd" stroke-width="1.6"/></svg>
<svg class="a" style="left:1080px;top:468px" width="12" height="14" viewBox="0 0 12 14"><path d="M0.9 1.9 A1 1 0 0 1 1.9 0.9 H7.5 L11 4.4 V12.6 A1 1 0 0 1 10 13.6 H1.9 A1 1 0 0 1 0.9 12.6 Z M7.3 1 V3.5 A1 1 0 0 0 8.3 4.5 H10.9" fill="none" stroke="#cdcdcd" stroke-width="1.6"/></svg>
<svg class="a" style="left:1094px;top:468px" width="12" height="14" viewBox="0 0 12 14"><path d="M0.9 1.9 A1 1 0 0 1 1.9 0.9 H7.5 L11 4.4 V12.6 A1 1 0 0 1 10 13.6 H1.9 A1 1 0 0 1 0.9 12.6 Z M7.3 1 V3.5 A1 1 0 0 0 8.3 4.5 H10.9" fill="none" stroke="#cdcdcd" stroke-width="1.6"/></svg>
<div class="a" style="left:1118.5px;top:451px;width:1px;height:35px;background:#d0d0d0"></div>
<svg class="a" style="left:1131px;top:455px" width="24" height="26" viewBox="0 0 24 26"><path d="M5 6 V1 H16 L23 8 V25 H5 V19" fill="none" stroke="#606060" stroke-width="2" stroke-linejoin="round"/><path d="M16 1 V8 H23" fill="none" stroke="#606060" stroke-width="1.5"/><path d="M0 13 H11" stroke="#5a9a7a" stroke-width="2"/><path d="M8 9 L12 13 L8 17" fill="none" stroke="#5a9a7a" stroke-width="2"/></svg>
<svg class="a" style="left:1166px;top:468px" width="8" height="4" viewBox="0 0 8 4"><path d="M0 0 H8 L4 4 Z" fill="#444"/></svg>
<svg class="a" style="left:1185px;top:460px" width="24" height="18" viewBox="0 0 24 18"><rect x="1" y="1" width="22" height="16" rx="1.5" fill="none" stroke="#606060" stroke-width="2"/><path d="M1.5 2 L12 10 L22.5 2 M1.5 16 L9 9 M22.5 16 L15 9" fill="none" stroke="#606060" stroke-width="1.8"/></svg>
<svg class="a" style="left:1222px;top:468px" width="8" height="4" viewBox="0 0 8 4"><path d="M0 0 H8 L4 4 Z" fill="#444"/></svg>
<svg class="a" style="left:1239px;top:454px" width="25" height="28" viewBox="0 0 25 28"><defs><clipPath id="wm"><path d="M3 3 H16.5 L22 8.5 V25 H3 Z"/></clipPath></defs><g clip-path="url(#wm)"><path d="M0 12 L12 0 M0 19 L19 0 M0 26 L26 0 M5 28 L28 5 M12 28 L28 12 M19 28 L28 19" stroke="#4a80c0" stroke-width="1.5"/></g><path d="M1 1 H17 L24 8 V27 H1 Z" fill="none" stroke="#606060" stroke-width="2" stroke-linejoin="round"/></svg>
<div class="a" style="left:766.5px;top:495.5px;width:383px;height:545px;background:#fff"></div>
<div class="a" style="left:766px;top:495px;width:384px;height:550px;border:1px solid #2a86d8;box-sizing:border-box"></div>
<div class="a" style="left:767px;top:496px;width:382px;height:550px;border:1px dashed #c0c0c0;box-sizing:border-box;opacity:0.8"></div>
<div class="t" style="left:770.8px;top:493.6px;font-size:12px;line-height:20px;color:#111;transform:scaleX(0.9359);transform-origin:0 50%;">ALWAZONSALE</div>
<div class="t" style="left:770.8px;top:510.3px;font-size:12px;line-height:20px;color:#111;transform:scaleX(0.8930);transform-origin:0 50%;">31 INDUSTRIAL AVE STE 4</div>
<div class="t" style="left:770.8px;top:526.6px;font-size:12px;line-height:20px;color:#111;transform:scaleX(0.9517);transform-origin:0 50%;">MAHWAH, NJ, 07430</div>
<div class="t" style="left:993.3px;top:493.8px;font-size:11.62px;line-height:20px;color:#222;font-weight:bold;">Order:</div>
<div class="t" style="left:1032.6px;top:493.8px;font-size:12px;line-height:20px;color:#111;transform:scaleX(0.9463);transform-origin:0 50%;">SO-0037735</div>
<div class="t" style="left:999.6px;top:510.5px;font-size:11.68px;line-height:20px;color:#222;font-weight:bold;">Date:</div>
<div class="t" style="left:1032.6px;top:510.5px;font-size:11.95px;line-height:20px;color:#111;">06/08/2021</div>
<div class="t" style="left:951.8px;top:528.6px;font-size:11.45px;line-height:20px;color:#222;font-weight:bold;">Customer PO:</div>
<div class="t" style="left:951.8px;top:546.5px;font-size:11.45px;line-height:20px;color:#222;font-weight:bold;">Package type:</div>
<div class="t" style="left:1032.6px;top:546.5px;font-size:11.47px;line-height:20px;color:#111;">box</div>
<div class="a" style="left:767px;top:582px;width:382px;height:1.5px;background:#cfcfcf"></div>
<div class="a" style="left:771px;top:590.5px;width:374px;height:128px;background:#fff;border:1px solid #c8c8c8;box-sizing:border-box"></div>
<div class="a" style="left:772px;top:591.5px;width:372px;height:30px;background:#f2f2f2"></div>
<div class="t" style="left:779.0px;top:596.2px;font-size:11.51px;line-height:20px;color:#111;font-weight:bold;">Ship to</div>
<div class="t" style="left:779.0px;top:626.0px;font-size:11.51px;line-height:20px;color:#111;">Marry Runaway</div>
<div class="t" style="left:779.0px;top:641.9px;font-size:11.24px;line-height:20px;color:#111;">22 Suzanne Dr</div>
<div class="t" style="left:779.0px;top:657.5px;font-size:10.85px;line-height:20px;color:#111;">111</div>
<div class="t" style="left:779.0px;top:673.7px;font-size:11.39px;line-height:20px;color:#111;">Monsey, NY, 10952, US,</div>
<div class="t" style="left:779.0px;top:689.4px;font-size:11.47px;line-height:20px;color:#111;">tel: 58487768</div>
<div class="a" style="left:771px;top:731.5px;width:374px;height:64px;background:#fff;border:1px solid #c8c8c8;box-sizing:border-box"></div>
<div class="a" style="left:772px;top:732.5px;width:372px;height:28px;background:#f2f2f2"></div>
<div class="t" style="left:779.0px;top:736.8px;font-size:11.94px;line-height:20px;color:#111;font-weight:bold;">Order information</div>
<div class="t" style="left:779.0px;top:767.8px;font-size:11.78px;line-height:20px;color:#111;">Shipped on 6/8/2021 using FedEx Ground 794639662357</div>
<div class="a" style="left:771px;top:805px;width:374px;height:82px;background:#fff;border:1px solid #c8c8c8;border-top:none;box-sizing:border-box"></div>
<div class="a" style="left:771px;top:805px;width:374px;height:31px;background:#004b87"></div>
<div class="a" style="left:875.5px;top:805px;width:1px;height:31px;background:#e8eef4"></div>
<div class="a" style="left:875.5px;top:836px;width:1px;height:51px;background:#cfcfcf"></div>
<div class="a" style="left:952.5px;top:805px;width:1px;height:31px;background:#e8eef4"></div>
<div class="a" style="left:952.5px;top:836px;width:1px;height:51px;background:#cfcfcf"></div>
<div class="a" style="left:1087.5px;top:805px;width:1px;height:31px;background:#e8eef4"></div>
<div class="a" style="left:1087.5px;top:836px;width:1px;height:51px;background:#cfcfcf"></div>
<div class="t" style="left:778.3px;top:810.7px;font-size:13px;line-height:20px;color:#fff;font-weight:bold;transform:scaleX(0.8379);transform-origin:0 50%;">SKU</div>
<div class="t" style="left:884.6px;top:810.7px;font-size:11.21px;line-height:20px;color:#fff;font-weight:bold;">Location</div>
<div class="t" style="left:961.5px;top:810.7px;font-size:11.4px;line-height:20px;color:#fff;font-weight:bold;">Description</div>
<div class="t" style="left:1106.2px;top:810.7px;font-size:12.0px;line-height:20px;color:#fff;font-weight:bold;">Qty</div>
<div class="t" style="left:779.2px;top:843.8px;font-size:11.51px;line-height:20px;color:#111;">1354</div>
<div class="t" style="left:884.6px;top:843.0px;font-size:11.7px;line-height:20px;color:#111;">pick</div>
<div class="t" style="left:884.6px;top:858.9px;font-size:11.89px;line-height:20px;color:#111;">loaction</div>
<div class="t" style="left:961.5px;top:843.8px;font-size:11.29px;line-height:20px;color:#111;">234325454</div>
<div class="t" style="left:1123.5px;top:843.8px;font-size:11.24px;line-height:20px;color:#111;">10</div>
<div class="a" style="left:858.3px;top:793.3px;width:104.80000000000007px;height:101.5px;border:4px solid #f25a4a;box-sizing:border-box;box-shadow:2px 2px 3px rgba(0,0,0,0.65), inset 2px 2px 2.5px rgba(0,0,0,0.85)"></div></body></html>
